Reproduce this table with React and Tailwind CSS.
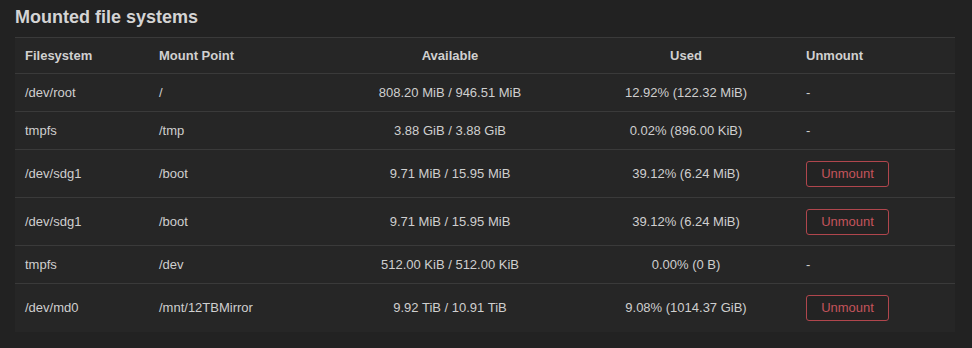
import React from "react";

const rows = [
  ["/dev/root", "/", "808.20 MiB / 946.51 MiB", "12.92% (122.32 MiB)", false],
  ["tmpfs", "/tmp", "3.88 GiB / 3.88 GiB", "0.02% (896.00 KiB)", false],
  ["/dev/sdg1", "/boot", "9.71 MiB / 15.95 MiB", "39.12% (6.24 MiB)", true],
  ["/dev/sdg1", "/boot", "9.71 MiB / 15.95 MiB", "39.12% (6.24 MiB)", true],
  ["tmpfs", "/dev", "512.00 KiB / 512.00 KiB", "0.00% (0 B)", false],
  ["/dev/md0", "/mnt/12TBMirror", "9.92 TiB / 10.91 TiB", "9.08% (1014.37 GiB)", true],
];

export default function App() {
  return (
    <div className="w-[972px] h-[348px] bg-[#222222] text-[#cfcfcf] text-[13px] font-['Liberation_Sans',Arial,sans-serif] pl-[15px] pr-[17px] pt-[6px]">
      <h2 className="text-[18px] font-bold text-[#d4d4d4] leading-[22px] mb-[9px]">Mounted file systems</h2>
      <table className="w-[940px] border-collapse bg-[#262626] table-fixed">
        <colgroup>
          <col className="w-[134px]" />
          <col className="w-[175px]" />
          <col className="w-[252px]" />
          <col className="w-[220px]" />
          <col className="w-[159px]" />
        </colgroup>
        <thead>
          <tr className="h-[36px] border-t border-[#3a3a3a]">
            <th className="text-left font-bold px-[10px] text-[#d0d0d0]">Filesystem</th>
            <th className="text-left font-bold px-[10px] text-[#d0d0d0]">Mount Point</th>
            <th className="text-center font-bold px-[10px] text-[#d0d0d0]">Available</th>
            <th className="text-center font-bold px-[10px] text-[#d0d0d0]">Used</th>
            <th className="text-left font-bold px-[10px] text-[#d0d0d0]">Unmount</th>
          </tr>
        </thead>
        <tbody>
          {rows.map((r, i) => (
            <tr key={i} className={`${r[4] ? "h-[48px]" : "h-[38px]"} ${i === rows.length - 1 ? "" : ""} border-t border-[#3a3a3a]`}>
              <td className="px-[10px]">{r[0]}</td>
              <td className="px-[10px]">{r[1]}</td>
              <td className="px-[10px] text-center">{r[2]}</td>
              <td className="px-[10px] text-center">{r[3]}</td>
              <td className="px-[10px]">
                {r[4] ? (
                  <button className="w-[83px] h-[26px] border border-[#b0464d] rounded-[3px] text-[#c4545c] bg-[#232323] text-[13px]">Unmount</button>
                ) : (
                  "-"
                )}
              </td>
            </tr>
          ))}
        </tbody>
      </table>
    </div>
  );
}
